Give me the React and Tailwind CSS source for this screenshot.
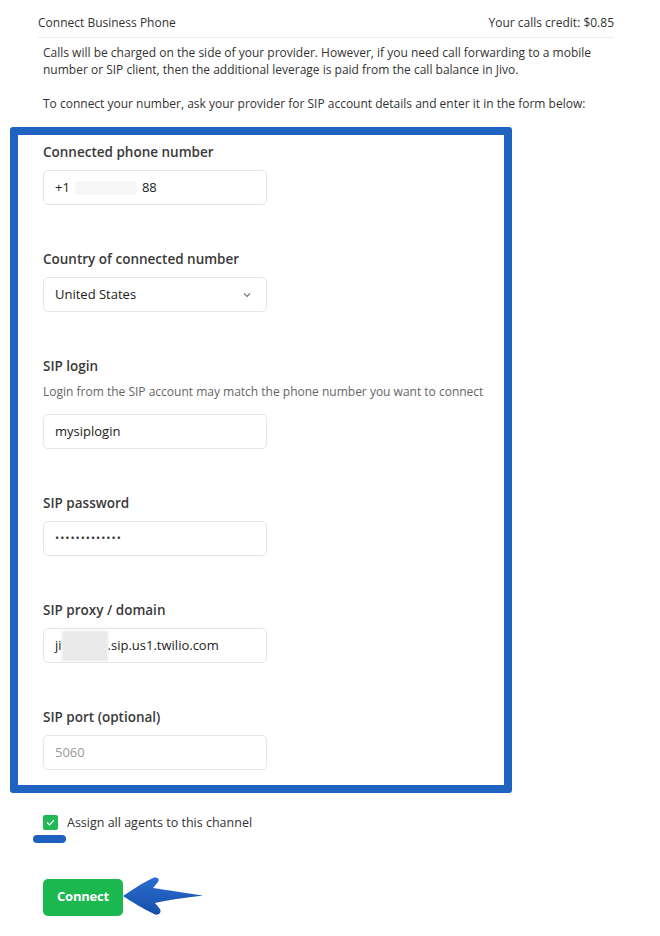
import React from "react";

const font = { fontFamily: '"Open Sans", "Noto Sans", sans-serif' };

function Field({ label, hint, children }) {
  return (
    <div className="flex flex-col">
      <p className="text-[13.5px] leading-[20px] font-semibold text-[#3a3a3a]">{label}</p>
      {hint ? (
        <p className="mt-[7px] text-[12px] leading-[17px] text-[#666]">{hint}</p>
      ) : null}
      <div className={hint ? "mt-[14px]" : "mt-[8px]"}>{children}</div>
    </div>
  );
}

function Box({ children, className = "" }) {
  return (
    <div
      className={
        "flex items-center w-[224px] h-[35px] pl-[11px] pr-[12px] border border-[#e6e6e6] rounded-[5px] bg-white text-[13px] text-[#222] " +
        className
      }
    >
      {children}
    </div>
  );
}

function Arrow() {
  return (
    <svg width="84" height="42" viewBox="0 0 84 42" className="-ml-[1px]">
      <defs>
        <linearGradient id="ag" x1="0" y1="0" x2="0" y2="1">
          <stop offset="0" stopColor="#2a6dd0" />
          <stop offset="1" stopColor="#174fa8" />
        </linearGradient>
      </defs>
      <path
        d="M1 20 C 10 14, 22 6, 31 2 C 35 0.5, 38 3, 36 6 L 31 12 C 45 14, 62 17, 81 19.5 C 62 22, 45 24, 33 27 L 38 33 C 40 37, 36 40, 32 38 C 22 33, 10 26, 1 20 Z"
        fill="url(#ag)"
      />
    </svg>
  );
}

export default function App() {
  return (
    <div className="w-[660px] min-h-[936px] bg-white text-[#333]" style={font}>
      {/* header */}
      <div className="ml-[38px] w-[576px] flex justify-between items-center pt-[15px] pb-[6px] border-b border-[#ececec] text-[12px] leading-[16px] text-[#333]">
        <span>Connect Business Phone</span>
        <span>Your calls credit: $0.85</span>
      </div>

      {/* intro */}
      <div className="ml-[43px] mr-[40px] mt-[6px] text-[12px] leading-[17px] text-[#333]">
        <p>
          Calls will be charged on the side of your provider. However, if you need call forwarding to a mobile
          number or SIP client, then the additional leverage is paid from the call balance in Jivo.
        </p>
        <p className="mt-[17px]">
          To connect your number, ask your provider for SIP account details and enter it in the form below:
        </p>
      </div>

      {/* highlighted form */}
      <div className="ml-[10px] mt-[15px] w-[502px] border-[8px] border-[#1f62c0] rounded-[3px] bg-white pl-[25px] pt-[7px] pb-[15px] flex flex-col gap-[44px]">
        <Field label="Connected phone number">
          <Box>
            <span>+1</span>
            <span className="inline-block w-[62px] h-[14px] mx-[5px] rounded-[4px] bg-[#f6f6f6]" />
            <span>88</span>
          </Box>
        </Field>

        <Field label="Country of connected number">
          <Box className="justify-between">
            <span>United States</span>
            <svg width="10" height="10" viewBox="0 0 10 10" className="mr-[2px]">
              <path d="M2 3.5 L5 6.5 L8 3.5" fill="none" stroke="#777" strokeWidth="1.2" />
            </svg>
          </Box>
        </Field>

        <Field
          label="SIP login"
          hint="Login from the SIP account may match the phone number you want to connect"
        >
          <Box>mysiplogin</Box>
        </Field>

        <Field label="SIP password">
          <Box>
            <span className="text-[11px] tracking-[1px] text-[#333]">•••••••••••••</span>
          </Box>
        </Field>

        <Field label="SIP proxy / domain">
          <Box>
            <span>ji</span>
            <span className="inline-block w-[46px] h-[30px] bg-[#e9e9e9] blur-[1px]" />
            <span>.sip.us1.twilio.com</span>
          </Box>
        </Field>

        <Field label="SIP port (optional)">
          <Box className="text-[#999]">5060</Box>
        </Field>
      </div>

      {/* assign */}
      <div className="ml-[43px] mt-[21px] flex items-center gap-[9px]">
        <span className="w-[15px] h-[15px] rounded-[2px] bg-[#22b855] flex items-center justify-center">
          <svg width="11" height="11" viewBox="0 0 11 11">
            <path d="M2 5.5 L4.5 8 L9 3" fill="none" stroke="#fff" strokeWidth="1.2" />
          </svg>
        </span>
        <span className="text-[12.5px] leading-[17px] text-[#333]">Assign all agents to this channel</span>
      </div>
      <div className="ml-[33px] mt-[4px] w-[33px] h-[8px] rounded-full bg-[#1f5fbf]" />

      {/* connect */}
      <div className="ml-[43px] mt-[33px] flex items-center">
        <button className="w-[80px] h-[37px] rounded-[5px] bg-[#1bb84f] text-white text-[13px] font-bold tracking-[-0.2px]">
          Connect
        </button>
        <Arrow />
      </div>
    </div>
  );
}
